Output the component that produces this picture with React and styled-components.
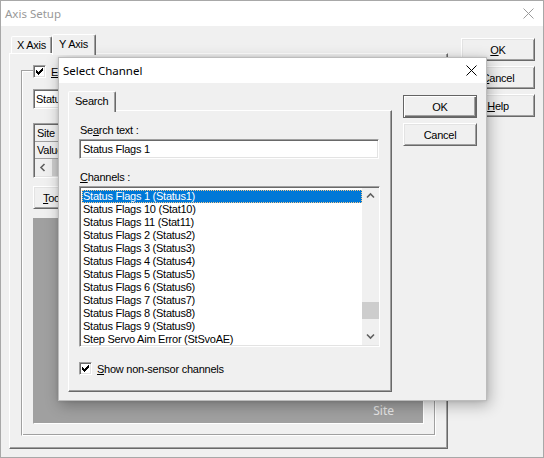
import React from 'react';
import styled, { createGlobalStyle, css } from 'styled-components';

const GlobalStyle = createGlobalStyle`
  html, body { margin: 0; padding: 0; }
  body {
    background: #f0f0f0;
    font-family: "Liberation Sans", Arial, sans-serif;
    font-size: 11px;
    letter-spacing: -0.25px;
    color: #000;
  }
  * { box-sizing: border-box; }
  u { text-decoration-thickness: 1px; text-underline-offset: 1px; }
`;

const raisedFrame = css`
  border: 1px solid;
  border-color: #fff #696969 #696969 #fff;
  box-shadow: inset 1px 1px 0 #e3e3e3, inset -1px -1px 0 #a0a0a0;
`;

const sunkenFrame = css`
  border: 1px solid;
  border-color: #a0a0a0 #fff #fff #a0a0a0;
  box-shadow: inset 1px 1px 0 #696969, inset -1px -1px 0 #e3e3e3;
`;

const Desktop = styled.div`
  position: relative;
  width: 544px;
  height: 458px;
  overflow: hidden;
  background: #f0f0f0;
`;

const Window = styled.div`
  display: flex;
  flex-direction: column;
  width: ${p => p.$w}px;
  height: ${p => p.$h}px;
  background: #f0f0f0;
  border: 1px solid ${p => (p.$active ? '#bcbcbc' : '#a8a8a8')};
`;

const FloatingWindow = styled(Window)`
  position: absolute;
  left: ${p => p.$x}px;
  top: ${p => p.$y}px;
  box-shadow: 2px 4px 14px rgba(0, 0, 0, 0.3), 0 0 3px rgba(0, 0, 0, 0.12);
`;

const TitleBar = styled.div`
  flex: none;
  height: 25px;
  display: flex;
  align-items: center;
  justify-content: space-between;
  padding: 0 9px 0 4px;
  background: #fff;
`;

const Title = styled.span`
  font-family: "Noto Sans", "Liberation Sans", sans-serif;
  font-size: 11.5px;
  letter-spacing: 0;
  color: ${p => (p.$active ? '#000' : '#999')};
`;

const CloseIcon = ({ color }) => (
  <svg width="11" height="11" viewBox="0 0 11 11">
    <path d="M0.5 0.5L10.5 10.5M10.5 0.5L0.5 10.5" stroke={color} strokeWidth="1" fill="none" />
  </svg>
);

const WindowBody = styled.div`
  flex: 1;
  min-height: 0;
  display: flex;
  gap: ${p => p.$gap}px;
  padding: 8px ${p => p.$pr}px 8px ${p => p.$pl}px;
`;

const TabControl = styled.div`
  flex: 1;
  min-width: 0;
  display: flex;
  flex-direction: column;
`;

const TabStrip = styled.div`
  flex: none;
  height: 19px;
  display: flex;
  align-items: flex-end;
  padding-left: ${p => p.$inset}px;
  position: relative;
  z-index: 2;
`;

const Tab = styled.div`
  height: ${p => (p.$selected ? 21 : 17)}px;
  margin-bottom: ${p => (p.$selected ? -2 : 0)}px;
  padding: ${p => (p.$selected ? '0 7px 2px 6px' : '0 5px')};
  display: flex;
  align-items: center;
  white-space: nowrap;
  background: #f0f0f0;
  border: 1px solid;
  border-bottom: none;
  border-color: #fff #696969 transparent #fff;
  border-radius: 2px 2px 0 0;
  box-shadow: inset -1px 0 0 #a0a0a0;
`;

const TabPane = styled.div`
  flex: 1;
  min-height: 0;
  display: flex;
  flex-direction: column;
  background: #f0f0f0;
  border: 1px solid;
  border-color: #fff #696969 #696969 #fff;
  box-shadow: inset -1px -1px 0 #a0a0a0;
  padding: ${p => p.$pad};
`;

const ButtonColumn = styled.div`
  flex: none;
  width: 74px;
  display: flex;
  flex-direction: column;
  gap: 5px;
  padding-top: 4px;
`;

const PushButton = styled.div`
  flex: none;
  height: 23px;
  display: flex;
  align-items: center;
  justify-content: center;
  white-space: nowrap;
  background: #f0f0f0;
  ${p =>
    p.$default
      ? css`
          border: 1px solid #646464;
          box-shadow: inset 1px 1px 0 #fff, inset -1px -1px 0 #696969, inset -2px -2px 0 #a0a0a0;
        `
      : raisedFrame}
  ${p =>
    p.$auto &&
    css`
      align-self: flex-start;
      padding: 0 9px;
    `}
`;

/* ---------- back dialog parts ---------- */

const GroupBox = styled.div`
  position: relative;
  flex: 1;
  min-height: 0;
  display: flex;
  flex-direction: column;
  padding: 18px 11px 11px 11px;
  border: 1px solid;
  border-color: #a0a0a0 #fff #fff #a0a0a0;
  box-shadow: inset 1px 1px 0 #fff, inset -1px -1px 0 #a0a0a0;
`;

const GroupLegend = styled.div`
  position: absolute;
  top: -6px;
  left: 11px;
  display: flex;
  align-items: center;
  gap: 5px;
  height: 13px;
  padding-right: 2px;
  background: #f0f0f0;
  white-space: nowrap;
`;

const TextField = styled.div`
  flex: none;
  height: 20px;
  display: flex;
  align-items: center;
  padding-left: ${p => p.$pl ?? 3}px;
  margin-right: ${p => p.$mr ?? 0}px;
  background: #fff;
  white-space: nowrap;
  overflow: hidden;
  ${sunkenFrame}
`;

const GridView = styled.div`
  flex: none;
  margin-top: 14px;
  display: flex;
  flex-direction: column;
  padding: 1px;
  background: #fff;
  ${sunkenFrame}
`;

const GridRow = styled.div`
  height: 17px;
  display: flex;
  border-bottom: 1px solid #a0a0a0;
`;

const GridHeadCell = styled.div`
  width: 70px;
  display: flex;
  align-items: center;
  padding-left: 2px;
  background: #f0f0f0;
  border-right: 1px solid #a0a0a0;
`;

const HScroll = styled.div`
  height: 17px;
  display: flex;
  background: #f0f0f0;
`;

const ScrollArrow = styled.div`
  flex: none;
  width: 17px;
  height: 17px;
  display: flex;
  align-items: center;
  justify-content: center;
`;

const HThumb = styled.div`
  width: ${p => p.$w}px;
  background: #cdcdcd;
`;

const Plot = styled.div`
  flex: 1;
  min-height: 0;
  margin-top: 9px;
  display: flex;
  align-items: flex-end;
  justify-content: flex-end;
  padding: 0 29px 5px 0;
  background: #a0a0a0;
  border: 1px solid;
  border-color: #a0a0a0 #fff #fff #a0a0a0;
`;

const PlotLabel = styled.span`
  font-family: "Noto Sans", "Liberation Sans", sans-serif;
  font-size: 12px;
  line-height: 14px;
  letter-spacing: 0;
  color: #e8e8e8;
`;

/* ---------- front dialog parts ---------- */

const FieldLabel = styled.div`
  flex: none;
  height: 13px;
  line-height: 13px;
  margin: ${p => p.$mt}px 0 2px 1px;
  white-space: nowrap;
`;

const ListBox = styled.div`
  flex: none;
  height: 161px;
  display: flex;
  padding: 1px 0 1px 1px;
  background: #fff;
  overflow: hidden;
  ${sunkenFrame}
`;

const ListItems = styled.div`
  flex: 1;
  min-width: 0;
  padding-top: 2px;
  overflow: hidden;
`;

const ListRow = styled.div`
  height: 13px;
  line-height: 13px;
  margin-left: 1px;
  padding-left: 1px;
  white-space: nowrap;
  ${p =>
    p.$selected &&
    css`
      background: #0078d7;
      color: #fff;
      outline: 1px dotted #f7c98a;
      outline-offset: -1px;
    `}
`;

const VScroll = styled.div`
  flex: none;
  width: 17px;
  display: flex;
  flex-direction: column;
  background: #f0f0f0;
`;

const VTrack = styled.div`
  flex: 1;
  min-height: 0;
`;

const VThumb = styled.div`
  height: 17px;
  margin-top: ${p => p.$offset}px;
  background: #cdcdcd;
`;

const CheckRow = styled.div`
  flex: none;
  display: flex;
  align-items: center;
  gap: 5px;
  height: 13px;
  margin-top: 15px;
  white-space: nowrap;
`;

const CheckBox = styled.span`
  flex: none;
  width: 13px;
  height: 13px;
  display: flex;
  align-items: center;
  justify-content: center;
  background: #fff;
  ${sunkenFrame}
`;

const CheckMark = () => (
  <svg width="7" height="7" viewBox="0 0 7 7" shapeRendering="crispEdges">
    <path
      d="M6 0h1v1h-1zM5 1h2v1h-2zM0 2h1v1h-1zM4 2h3v1h-3zM0 3h2v1h-2zM3 3h3v1h-3zM0 4h5v1h-5zM1 5h3v1h-3zM2 6h1v1h-1z"
      fill="#000"
    />
  </svg>
);

const Chevron = ({ dir }) => {
  const d = {
    up: 'M1 5.5L4.5 2L8 5.5',
    down: 'M1 2.5L4.5 6L8 2.5',
    left: 'M5.5 1L2 4.5L5.5 8',
  }[dir];
  return (
    <svg width="9" height="9" viewBox="0 0 9 9">
      <path d={d} stroke="#606060" strokeWidth="1.6" fill="none" />
    </svg>
  );
};

const channels = [
  'Status Flags 1 (Status1)',
  'Status Flags 10 (Stat10)',
  'Status Flags 11 (Stat11)',
  'Status Flags 2 (Status2)',
  'Status Flags 3 (Status3)',
  'Status Flags 4 (Status4)',
  'Status Flags 5 (Status5)',
  'Status Flags 6 (Status6)',
  'Status Flags 7 (Status7)',
  'Status Flags 8 (Status8)',
  'Status Flags 9 (Status9)',
  'Step Servo Aim Error (StSvoAE)',
];

export default function App() {
  return (
    <>
      <GlobalStyle />
      <Desktop>
        <Window $w={544} $h={458}>
          <TitleBar>
            <Title>Axis Setup</Title>
            <CloseIcon color="#9a9a9a" />
          </TitleBar>
          <WindowBody $pl={8} $pr={8} $gap={13}>
            <TabControl>
              <TabStrip $inset={2}>
                <Tab>X Axis</Tab>
                <Tab $selected>Y Axis</Tab>
              </TabStrip>
              <TabPane $pad="16px 11px 12px 11px">
                <GroupBox>
                  <GroupLegend>
                    <CheckBox>
                      <CheckMark />
                    </CheckBox>
                    <span>
                      <u>E</u>nabled
                    </span>
                  </GroupLegend>
                  <TextField $pl={2}>Status Flags 1 (Status1)</TextField>
                  <GridView>
                    <GridRow>
                      <GridHeadCell>Site</GridHeadCell>
                    </GridRow>
                    <GridRow>
                      <GridHeadCell>Value</GridHeadCell>
                    </GridRow>
                    <HScroll>
                      <ScrollArrow>
                        <Chevron dir="left" />
                      </ScrollArrow>
                      <HThumb $w={140} />
                    </HScroll>
                  </GridView>
                  <PushButton $auto style={{ marginTop: 8 }}>
                    <span>
                      <u>T</u>ools...
                    </span>
                  </PushButton>
                  <Plot>
                    <PlotLabel>Site</PlotLabel>
                  </Plot>
                </GroupBox>
              </TabPane>
            </TabControl>
            <ButtonColumn>
              <PushButton>
                <span>
                  <u>O</u>K
                </span>
              </PushButton>
              <PushButton>
                <span>
                  <u>C</u>ancel
                </span>
              </PushButton>
              <PushButton>
                <span>
                  <u>H</u>elp
                </span>
              </PushButton>
            </ButtonColumn>
          </WindowBody>
        </Window>

        <FloatingWindow $active $x={58} $y={57} $w={429} $h={344}>
          <TitleBar>
            <Title $active>Select Channel</Title>
            <CloseIcon color="#000" />
          </TitleBar>
          <WindowBody $pl={9} $pr={9} $gap={11}>
            <TabControl>
              <TabStrip $inset={0}>
                <Tab $selected>Search</Tab>
              </TabStrip>
              <TabPane $pad="13px 11px 0 10px">
                <FieldLabel $mt={0}>
                  Se<u>a</u>rch text :
                </FieldLabel>
                <TextField $mr={1}>Status Flags 1</TextField>
                <FieldLabel $mt={12}>
                  <u>C</u>hannels :
                </FieldLabel>
                <ListBox>
                  <ListItems>
                    {channels.map((c, i) => (
                      <ListRow key={c} $selected={i === 0}>
                        {c}
                      </ListRow>
                    ))}
                  </ListItems>
                  <VScroll>
                    <ScrollArrow>
                      <Chevron dir="up" />
                    </ScrollArrow>
                    <VTrack>
                      <VThumb $offset={97} />
                    </VTrack>
                    <ScrollArrow>
                      <Chevron dir="down" />
                    </ScrollArrow>
                  </VScroll>
                </ListBox>
                <CheckRow>
                  <CheckBox>
                    <CheckMark />
                  </CheckBox>
                  <span>
                    <u>S</u>how non-sensor channels
                  </span>
                </CheckRow>
              </TabPane>
            </TabControl>
            <ButtonColumn>
              <PushButton $default>OK</PushButton>
              <PushButton>Cancel</PushButton>
            </ButtonColumn>
          </WindowBody>
        </FloatingWindow>
      </Desktop>
    </>
  );
}
